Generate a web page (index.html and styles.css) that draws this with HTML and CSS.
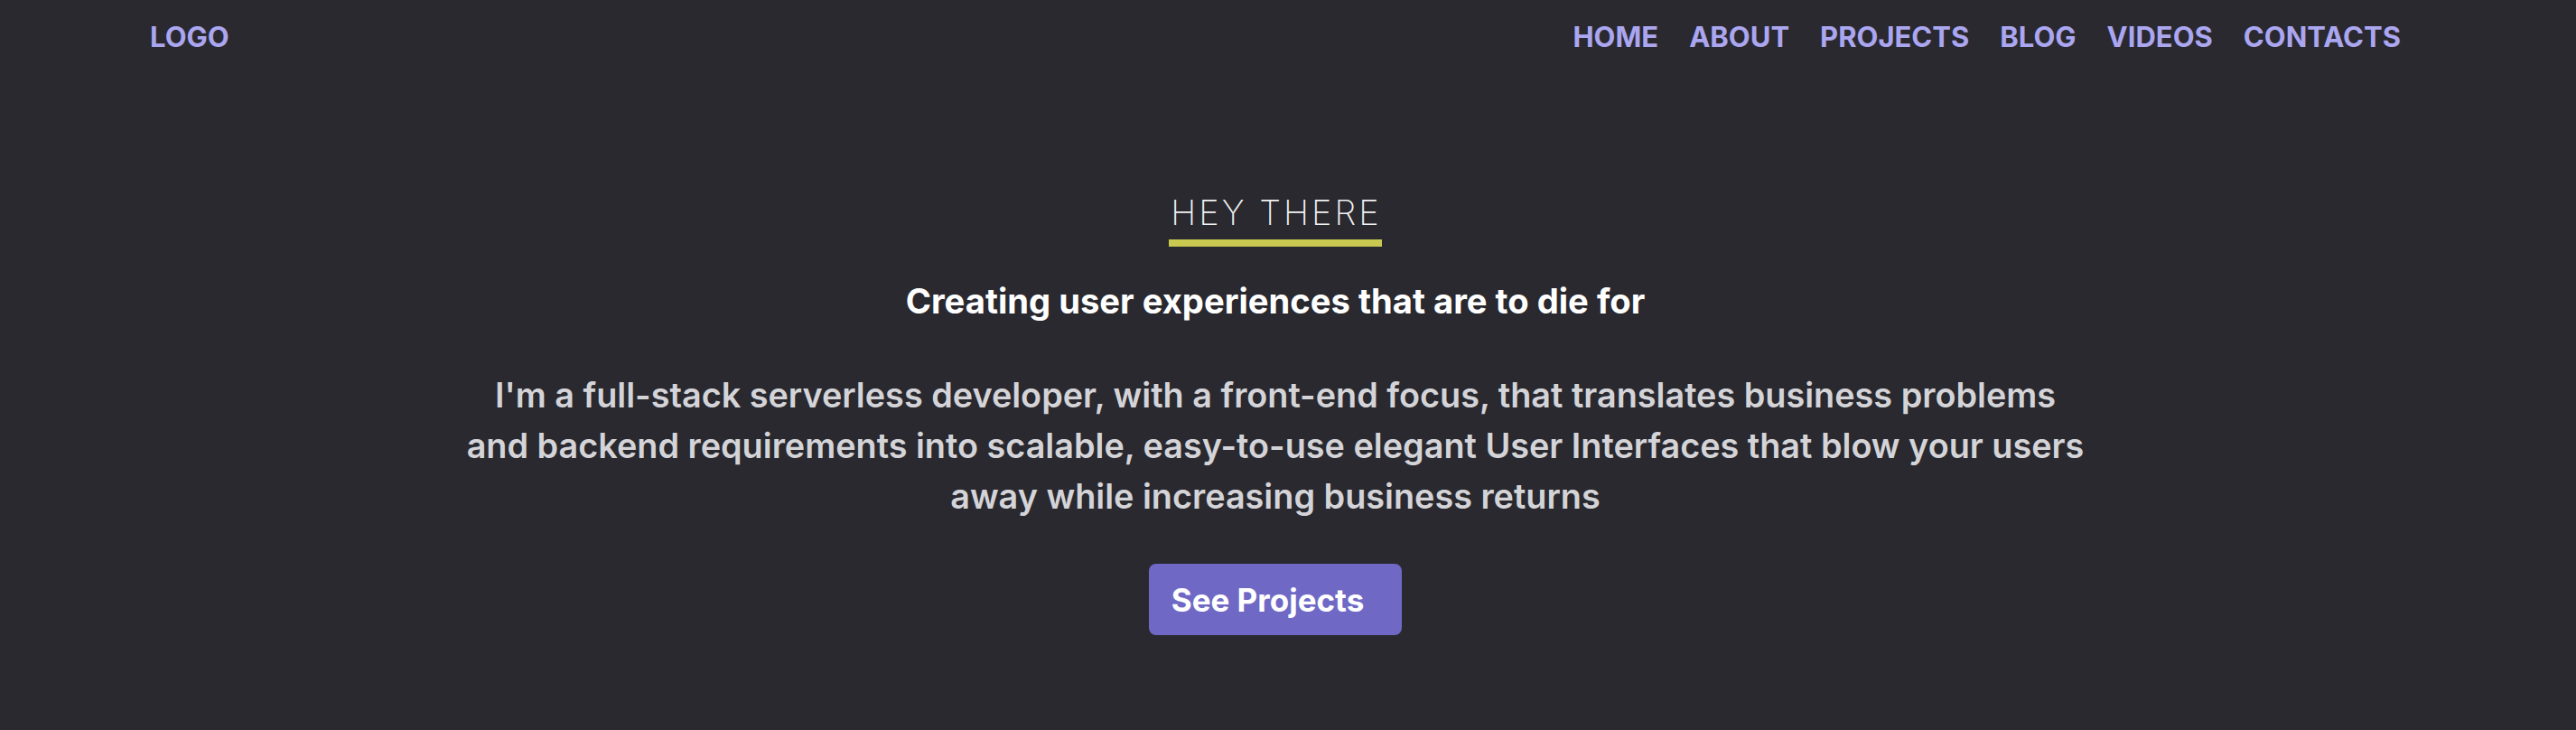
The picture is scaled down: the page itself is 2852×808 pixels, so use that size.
FILE: index.html
```html
<!DOCTYPE html>
<html lang="en">
<head>
<meta charset="utf-8">
<title>Portfolio</title>
<link rel="stylesheet" href="styles.css">
</head>
<body>
<div class="page">
  <header class="nav">
    <a class="logo" href="#">LOGO</a>
    <nav class="links">
      <a href="#">HOME</a>
      <a href="#">ABOUT</a>
      <a href="#">PROJECTS</a>
      <a href="#">BLOG</a>
      <a href="#">VIDEOS</a>
      <a href="#">CONTACTS</a>
    </nav>
  </header>
  <main class="hero">
    <div class="eyebrow">HEY THERE</div>
    <h1 class="title">Creating user experiences that are to die for</h1>
    <p class="intro">I'm a full-stack serverless developer, with a front-end focus, that translates business problems<br>and backend requirements into scalable, easy-to-use elegant User Interfaces that blow your users<br>away while increasing business returns</p>
    <a class="btn" href="#">See Projects</a>
  </main>
</div>
</body>
</html>
```
FILE: styles.css
```css
html, body {
  margin: 0;
  padding: 0;
  background: #29292f;
}
body {
  font-family: Inter, "Noto Sans", sans-serif;
  height: 808px;
  overflow: hidden;
}
.page {
  width: 2824px;
}
.nav {
  display: flex;
  justify-content: space-between;
  align-items: center;
  height: 80px;
  padding: 0 166px;
}
.nav a {
  color: #aba6f0;
  text-decoration: none;
  font-weight: 700;
  font-size: 31px;
}
.links {
  display: flex;
  gap: 34px;
}
.hero {
  display: flex;
  flex-direction: column;
  align-items: center;
  padding-top: 133px;
}
.eyebrow {
  color: #f2f2f2;
  font-weight: 200;
  font-size: 38px;
  line-height: 1.2;
  letter-spacing: 3px;
  padding: 0 0 6px 2px;
  border-bottom: 8px solid #c9c951;
}
.title {
  margin: 36px 0 0;
  color: #ffffff;
  font-size: 38.2px;
  font-weight: 700;
  line-height: 1.3;
}
.intro {
  margin: 51px 0 0;
  text-align: center;
  color: #d4d4d8;
  font-size: 37.8px;
  font-weight: 600;
  line-height: 56px;
}
.btn {
  margin-top: 47px;
  display: flex;
  align-items: center;
  height: 79px;
  padding: 0 42px 0 25px;
  border-radius: 8px;
  background: #6f69c5;
  color: #ffffff;
  font-size: 35px;
  font-weight: 700;
  text-decoration: none;
}
```
